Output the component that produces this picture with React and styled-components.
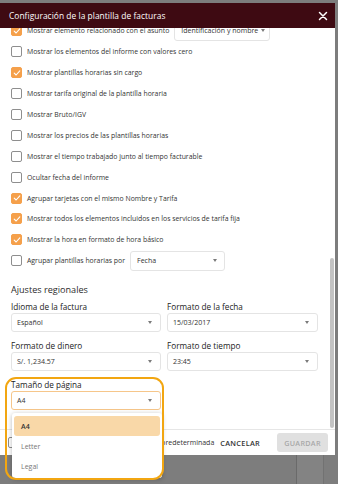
import React from "react";
import styled, { createGlobalStyle } from "styled-components";

const GlobalStyle = createGlobalStyle`
  html, body {
    margin: 0;
    padding: 0;
  }
  body {
    font-family: "Open Sans", "Noto Sans", sans-serif;
    color: #333;
  }
`;

const Page = styled.div`
  position: relative;
  width: 338px;
  height: 484px;
  overflow: hidden;
  background: #7d7d7d;
  padding-top: 3px;
  box-sizing: border-box;
`;

const Dialog = styled.div`
  width: 335px;
  height: 452px;
  background: #fff;
  display: flex;
  flex-direction: column;
`;

const Header = styled.div`
  flex: none;
  height: 25px;
  background: #3e0a12;
  color: #fff;
  display: flex;
  align-items: center;
  justify-content: space-between;
  padding: 0 7px 0 9px;
`;

const Title = styled.h1`
  margin: 0;
  font-size: 8.4px;
  font-weight: 400;
  letter-spacing: 0.05px;
`;

const CloseButton = styled.button`
  border: none;
  background: none;
  padding: 0;
  width: 11px;
  height: 11px;
  display: flex;
  align-items: center;
  justify-content: center;
  color: #fff;
`;

const Body = styled.div`
  position: relative;
  flex: none;
  height: 401px;
  overflow: hidden;
`;

const Content = styled.div`
  margin-top: -7.5px;
  padding: 0 17px 0 11px;
`;

const Rows = styled.div`
  display: flex;
  flex-direction: column;
`;

const Row = styled.div`
  height: 20.9px;
  display: flex;
  align-items: center;
  gap: 5px;
  font-size: 6.9px;
  color: #333;
  white-space: nowrap;
`;

const Box = styled.span`
  flex: none;
  width: 11px;
  height: 11px;
  box-sizing: border-box;
  border-radius: 2px;
  border: 1px solid ${(p) => (p.$checked ? "#f5a04b" : "#8e8e8e")};
  background: ${(p) => (p.$checked ? "#f5a04b" : "#fff")};
  display: flex;
  align-items: center;
  justify-content: center;
`;

const InlineSelect = styled.div`
  height: 20px;
  width: ${(p) => p.$width}px;
  box-sizing: border-box;
  border: 1px solid #e4e4e4;
  border-radius: 3px;
  display: flex;
  align-items: center;
  justify-content: ${(p) => (p.$tight ? "flex-start" : "space-between")};
  gap: 3px;
  padding: 0 7px 0 6px;
  font-size: 7px;
  color: #333;
`;

const Caret = styled.span`
  flex: none;
  width: 0;
  height: 0;
  border-left: 2.5px solid transparent;
  border-right: 2.5px solid transparent;
  border-top: 3px solid #7a7a7a;
`;

const SectionTitle = styled.h2`
  margin: 11px 0 0;
  font-size: 9.1px;
  line-height: 16px;
  font-weight: 500;
  color: #2b2b2b;
`;

const Grid = styled.div`
  margin-top: 3px;
  display: grid;
  grid-template-columns: 150px 151px;
  column-gap: 6px;
  row-gap: 8px;
`;

const Field = styled.div`
  display: flex;
  flex-direction: column;
`;

const Label = styled.label`
  font-size: 8.2px;
  line-height: 12px;
  font-weight: 500;
  color: #222;
  white-space: nowrap;
`;

const Select = styled.div`
  height: 19px;
  box-sizing: border-box;
  border: 1px solid ${(p) => (p.$focused ? "#f6c68a" : "#e4e4e4")};
  border-radius: 3px;
  display: flex;
  align-items: center;
  justify-content: space-between;
  padding: 0 8px 0 5px;
  font-size: 7px;
  color: #333;
`;

const Thumb = styled.div`
  position: absolute;
  left: 330px;
  top: 230px;
  width: 4px;
  height: 170px;
  border-radius: 3px;
  background: #c3c3c3;
`;

const Footer = styled.div`
  flex: none;
  height: 25px;
  border-top: 1px solid #e6e6e6;
  display: flex;
  align-items: center;
  padding: 0 7px 0 8px;
  gap: 6px;
  font-size: 7px;
  white-space: nowrap;
`;

const FooterCheck = styled.label`
  flex: 1;
  display: flex;
  align-items: center;
  gap: 5px;
  color: #333;
`;

const FooterText = styled.span`
  flex: 1;
  text-align: right;
`;

const TextButton = styled.button`
  border: none;
  background: none;
  padding: 0;
  margin-right: 11px;
  font-family: inherit;
  font-size: 7.3px;
  font-weight: 600;
  letter-spacing: 0.3px;
  color: #333;
`;

const SaveButton = styled.button`
  width: 51px;
  height: 19px;
  border: none;
  border-radius: 3px;
  background: #e0e0e0;
  font-family: inherit;
  font-size: 7.2px;
  font-weight: 600;
  letter-spacing: 0.3px;
  color: #a8a8a8;
`;

const Menu = styled.ul`
  position: absolute;
  left: 12px;
  top: 413px;
  width: 150px;
  margin: 0;
  padding: 3px 2px 2px;
  box-sizing: border-box;
  list-style: none;
  background: #fff;
  border-radius: 3px;
  box-shadow: 0 1px 5px rgba(0, 0, 0, 0.28);
`;

const MenuItem = styled.li`
  height: 20px;
  display: flex;
  align-items: center;
  padding-left: 7px;
  border-radius: 3px;
  font-size: 7px;
  font-weight: ${(p) => (p.$active ? 600 : 400)};
  color: ${(p) => (p.$active ? "#333" : "#777")};
  background: ${(p) => (p.$active ? "#f9d8a8" : "transparent")};
`;

const Highlight = styled.div`
  position: absolute;
  left: 5px;
  top: 377px;
  width: 159px;
  height: 103px;
  box-sizing: border-box;
  border: 2px solid #f2a611;
  border-radius: 11px;
  pointer-events: none;
`;

const BackdropPane = styled.div`
  position: absolute;
  left: 296px;
  top: 455px;
  width: 26px;
  height: 29px;
  border-left: 1px solid #6a6a6a;
  border-right: 1px solid #727272;
  background: #838383;
`;

const Check = ({ checked }) => (
  <Box $checked={checked}>
    {checked && (
      <svg width="8" height="8" viewBox="0 0 8 8">
        <path
          d="M1.2 4.2 L3.1 6 L6.8 1.9"
          fill="none"
          stroke="#fff"
          strokeWidth="1.1"
          strokeLinecap="round"
          strokeLinejoin="round"
        />
      </svg>
    )}
  </Box>
);

const options = [
  { label: "Mostrar los elementos del informe con valores cero", checked: false },
  { label: "Mostrar plantillas horarias sin cargo", checked: true },
  { label: "Mostrar tarifa original de la plantilla horaria", checked: false },
  { label: "Mostrar Bruto/IGV", checked: false },
  { label: "Mostrar los precios de las plantillas horarias", checked: false },
  { label: "Mostrar el tiempo trabajado junto al tiempo facturable", checked: false },
  { label: "Ocultar fecha del informe", checked: false },
  { label: "Agrupar tarjetas con el mismo Nombre y Tarifa", checked: true },
  { label: "Mostrar todos los elementos incluidos en los servicios de tarifa fija", checked: true },
  { label: "Mostrar la hora en formato de hora básico", checked: true },
];

const fields = [
  { label: "Idioma de la factura", value: "Español" },
  { label: "Formato de la fecha", value: "15/03/2017" },
  { label: "Formato de dinero", value: "S/. 1,234.57" },
  { label: "Formato de tiempo", value: "23:45" },
];

export default function App() {
  return (
    <>
      <GlobalStyle />
      <Page>
        <Dialog>
          <Header>
            <Title>Configuración de la plantilla de facturas</Title>
            <CloseButton aria-label="Cerrar">
              <svg width="10" height="10" viewBox="0 0 10 10">
                <path
                  d="M1.5 1.5 L8.5 8.5 M8.5 1.5 L1.5 8.5"
                  stroke="#fff"
                  strokeWidth="1.5"
                  strokeLinecap="round"
                />
              </svg>
            </CloseButton>
          </Header>
          <Body>
            <Content>
              <Rows>
                <Row>
                  <Check checked />
                  Mostrar elemento relacionado con el asunto
                  <InlineSelect $width={96} $tight>
                    Identificación y nombre
                    <Caret />
                  </InlineSelect>
                </Row>
                {options.map((o) => (
                  <Row key={o.label}>
                    <Check checked={o.checked} />
                    {o.label}
                  </Row>
                ))}
                <Row>
                  <Check checked={false} />
                  Agrupar plantillas horarias por
                  <InlineSelect $width={95}>
                    Fecha
                    <Caret />
                  </InlineSelect>
                </Row>
              </Rows>
              <SectionTitle>Ajustes regionales</SectionTitle>
              <Grid>
                {fields.map((f) => (
                  <Field key={f.label}>
                    <Label>{f.label}</Label>
                    <Select>
                      {f.value}
                      <Caret />
                    </Select>
                  </Field>
                ))}
                <Field>
                  <Label>Tamaño de página</Label>
                  <Select $focused>
                    A4
                    <Caret />
                  </Select>
                </Field>
              </Grid>
            </Content>
            <Thumb />
          </Body>
          <Footer>
            <FooterCheck>
              <Check checked={false} />
              <FooterText>Establecer como predeterminada</FooterText>
            </FooterCheck>
            <TextButton>CANCELAR</TextButton>
            <SaveButton disabled>GUARDAR</SaveButton>
          </Footer>
        </Dialog>
        <BackdropPane />
        <Menu>
          <MenuItem $active>A4</MenuItem>
          <MenuItem>Letter</MenuItem>
          <MenuItem>Legal</MenuItem>
        </Menu>
        <Highlight />
      </Page>
    </>
  );
}
